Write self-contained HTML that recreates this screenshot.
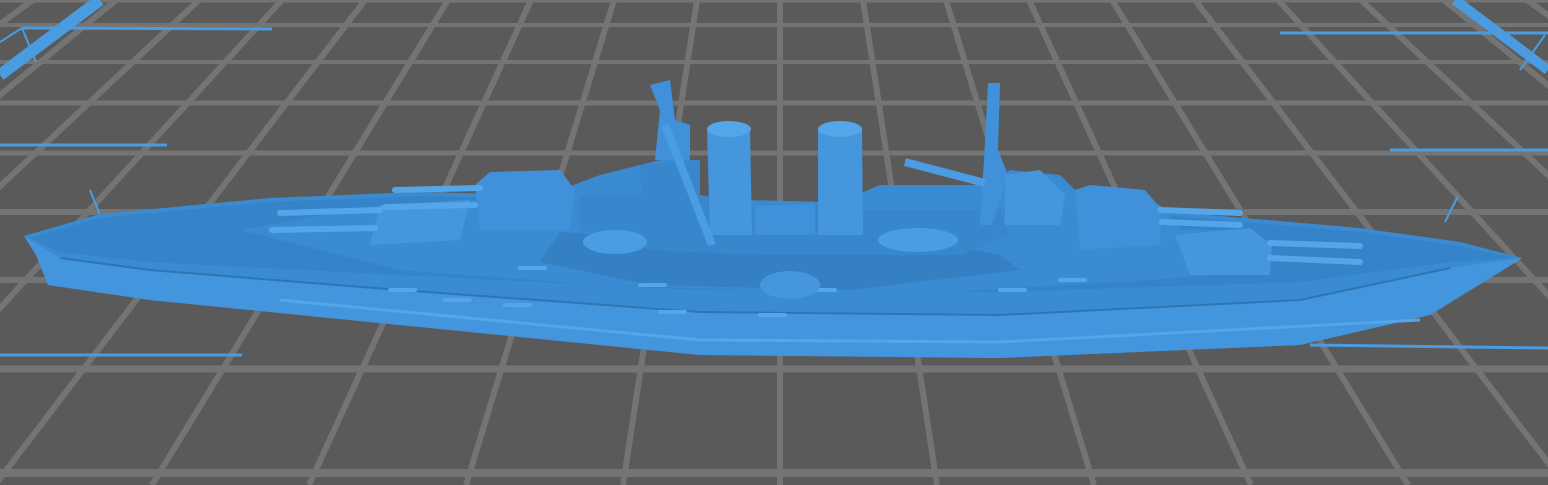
<!DOCTYPE html>
<html><head><style>html,body{margin:0;padding:0;background:#5a5a5a;overflow:hidden}svg{display:block}</style></head>
<body>
<svg width="1548" height="485" viewBox="0 0 1548 485" xmlns="http://www.w3.org/2000/svg">
<rect width="1548" height="485" fill="#5a5a5a"/>
<g stroke="#747474" fill="none">
<line x1="0" y1="1" x2="1548" y2="1" stroke-width="3"/>
<line x1="0" y1="25" x2="1548" y2="25" stroke-width="4"/>
<line x1="0" y1="62" x2="1548" y2="62" stroke-width="4"/>
<line x1="0" y1="103" x2="1548" y2="103" stroke-width="5"/>
<line x1="0" y1="153" x2="1548" y2="153" stroke-width="5"/>
<line x1="0" y1="212" x2="1548" y2="212" stroke-width="6"/>
<line x1="0" y1="280" x2="1548" y2="280" stroke-width="6"/>
<line x1="0" y1="369" x2="1548" y2="369" stroke-width="7"/>
<line x1="0" y1="473" x2="1548" y2="473" stroke-width="8"/>
</g>
<g stroke="#747474" stroke-width="6">
<line x1="-216" y1="0" x2="-1104" y2="485"/>
<line x1="-133" y1="0" x2="-947" y2="485"/>
<line x1="-50" y1="0" x2="-790" y2="485"/>
<line x1="33" y1="0" x2="-633" y2="485"/>
<line x1="116" y1="0" x2="-476" y2="485"/>
<line x1="199" y1="0" x2="-319" y2="485"/>
<line x1="282" y1="0" x2="-162" y2="485"/>
<line x1="365" y1="0" x2="-5" y2="485"/>
<line x1="448" y1="0" x2="152" y2="485"/>
<line x1="531" y1="0" x2="309" y2="485"/>
<line x1="614" y1="0" x2="466" y2="485"/>
<line x1="697" y1="0" x2="623" y2="485"/>
<line x1="780" y1="0" x2="780" y2="485"/>
<line x1="863" y1="0" x2="937" y2="485"/>
<line x1="946" y1="0" x2="1094" y2="485"/>
<line x1="1029" y1="0" x2="1251" y2="485"/>
<line x1="1112" y1="0" x2="1408" y2="485"/>
<line x1="1195" y1="0" x2="1565" y2="485"/>
<line x1="1278" y1="0" x2="1722" y2="485"/>
<line x1="1361" y1="0" x2="1879" y2="485"/>
<line x1="1444" y1="0" x2="2036" y2="485"/>
<line x1="1527" y1="0" x2="2193" y2="485"/>
<line x1="1610" y1="0" x2="2350" y2="485"/>
</g>
<g stroke="#4a9be0" fill="none">
<line x1="22" y1="28" x2="272" y2="29" stroke-width="3"/>
<line x1="0" y1="75" x2="100" y2="0" stroke-width="12"/>
<line x1="22" y1="28" x2="36" y2="62" stroke-width="2"/>
<line x1="22" y1="28" x2="0" y2="42" stroke-width="2"/>
<line x1="0" y1="145" x2="167" y2="145" stroke-width="3"/>
<line x1="0" y1="355" x2="242" y2="355" stroke-width="3"/>
<line x1="1280" y1="33" x2="1548" y2="33" stroke-width="3"/>
<line x1="1455" y1="0" x2="1548" y2="70" stroke-width="10"/>
<line x1="1520" y1="70" x2="1545" y2="35" stroke-width="2"/>
<line x1="1390" y1="150" x2="1548" y2="150" stroke-width="3"/>
<line x1="1310" y1="345" x2="1548" y2="348" stroke-width="3"/>
<line x1="90" y1="190" x2="100" y2="215" stroke-width="2"/>
<line x1="1445" y1="222" x2="1458" y2="196" stroke-width="2"/>
</g>
<!-- hull -->
<path d="M24,236 L100,214 L270,198 L420,192 L1150,210 L1360,228 L1460,242 L1522,258 L1500,272 L1430,315 L1300,345 L1000,358 L700,355 L400,325 L150,300 L48,285 L36,255 Z" fill="#3b8bd2"/>
<path d="M24,236 L36,255 L48,285 L150,300 L400,325 L700,355 L1000,358 L1300,345 L1430,315 L1500,272 L1522,258 L1450,268 L1300,300 L1000,315 L700,312 L400,290 L150,270 L60,258 Z" fill="#4396dd"/>
<path d="M60,258 L150,270 L400,290 L700,312 L1000,315 L1300,300 L1450,268" stroke="#2f74b3" stroke-width="2" fill="none"/>
<path d="M280,300 L700,340 L1000,342 L1420,320" stroke="#55a6e8" stroke-width="3" fill="none"/>
<!-- deck -->
<path d="M30,238 L100,218 L270,202 L420,196 L1150,214 L1360,232 L1460,246 L1515,258 L1450,262 L1300,282 L1000,292 L700,290 L400,275 L150,262 L60,252 Z" fill="#3583c8"/>
<!-- superstructure -->
<path d="M240,230 L380,205 L480,200 L560,190 L600,175 L640,165 L660,160 L700,160 L700,195 L760,205 L820,210 L880,185 L990,185 L1010,170 L1060,175 L1080,195 L1160,205 L1180,230 L1250,230 L1270,270 L1150,280 L900,295 L600,285 L400,270 Z" fill="#3b8bd2"/>
<path d="M380,205 L470,200 L460,240 L370,245 Z" fill="#4596dd"/>
<path d="M475,185 L490,172 L560,170 L575,190 L570,230 L480,230 Z" fill="#4191da"/>
<path d="M1075,190 L1090,185 L1145,190 L1162,210 L1160,245 L1080,250 Z" fill="#4191da"/>
<path d="M1175,235 L1250,228 L1272,245 L1270,275 L1190,275 Z" fill="#4596dd"/>
<path d="M560,232 L760,245 L900,235 L1000,255 L1020,270 L850,290 L650,285 L540,262 Z" fill="#3480c3"/>
<path d="M580,195 L700,195 L760,210 L1000,210 L1010,235 L960,255 L760,255 L650,250 L580,230 Z" fill="#3887cd"/>
<path d="M640,165 L700,160 L700,240 L645,240 Z" fill="#3887cd"/>
<!-- funnels -->
<path d="M707,130 Q730,118 750,130 L752,235 L710,235 Z" fill="#4596dd"/>
<ellipse cx="729" cy="129" rx="22" ry="8" fill="#55a6e8"/>
<path d="M818,130 Q840,118 862,130 L863,235 L818,235 Z" fill="#4596dd"/>
<ellipse cx="840" cy="129" rx="22" ry="8" fill="#55a6e8"/>
<rect x="755" y="205" width="60" height="30" fill="#4191da"/>
<!-- masts -->
<path d="M650,85 L670,80 L675,120 L690,125 L690,160 L655,160 L660,110 Z" fill="#4191da"/>
<line x1="665" y1="125" x2="712" y2="245" stroke="#4a9de3" stroke-width="8"/>
<path d="M988,83 L1000,83 L998,150 L1008,175 L992,225 L980,225 L984,160 Z" fill="#4191da"/>
<line x1="905" y1="162" x2="985" y2="183" stroke="#4a9de3" stroke-width="8"/>
<path d="M1005,175 L1040,170 L1065,195 L1060,225 L1005,225 Z" fill="#4596dd"/>
<!-- guns -->
<g stroke="#55a6e8" stroke-width="6" stroke-linecap="round">
<line x1="395" y1="190" x2="480" y2="188"/>
<line x1="385" y1="207" x2="475" y2="205"/>
<line x1="280" y1="213" x2="380" y2="210"/>
<line x1="272" y1="230" x2="375" y2="228"/>
<line x1="1160" y1="210" x2="1240" y2="213"/>
<line x1="1162" y1="222" x2="1240" y2="225"/>
<line x1="1270" y1="243" x2="1360" y2="246"/>
<line x1="1270" y1="258" x2="1360" y2="262"/>
</g>
<g stroke="#55a6e8" stroke-width="4" stroke-linecap="round">
<line x1="520" y1="268" x2="545" y2="268"/><line x1="390" y1="290" x2="415" y2="290"/>
<line x1="445" y1="300" x2="470" y2="300"/><line x1="505" y1="305" x2="530" y2="305"/>
<line x1="640" y1="285" x2="665" y2="285"/><line x1="660" y1="312" x2="685" y2="312"/>
<line x1="760" y1="315" x2="785" y2="315"/><line x1="810" y1="290" x2="835" y2="290"/>
<line x1="1000" y1="290" x2="1025" y2="290"/><line x1="1060" y1="280" x2="1085" y2="280"/>
</g>
<ellipse cx="615" cy="242" rx="32" ry="12" fill="#4a9de3"/>
<ellipse cx="918" cy="240" rx="40" ry="12" fill="#4a9de3"/>
<ellipse cx="790" cy="285" rx="30" ry="14" fill="#4596dd"/>
</svg>
</body></html>
